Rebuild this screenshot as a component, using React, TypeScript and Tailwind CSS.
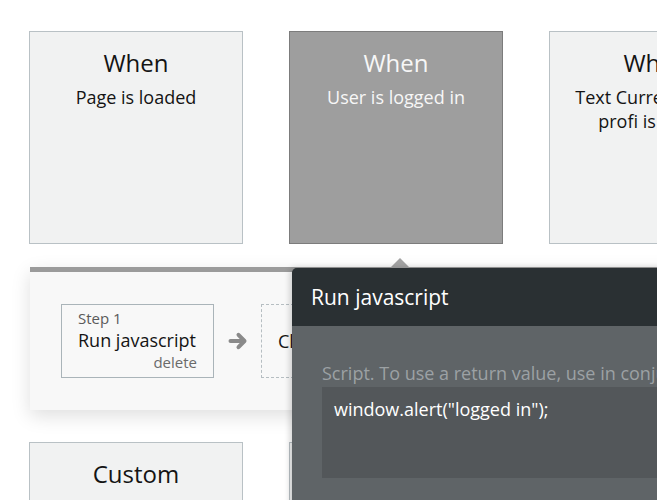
import React from "react";

function Card({
  title,
  lines,
  dark,
}: {
  title: string;
  lines?: string[];
  dark?: boolean;
}) {
  return (
    <div
      className={
        dark
          ? "w-[214px] h-[213px] shrink-0 border border-[#7c7c7c] bg-[#9e9e9e] text-[#f7f7f7] text-center pt-[15px]"
          : "w-[214px] h-[213px] shrink-0 border border-[#b9c1c5] bg-[#f1f2f2] text-[#141414] text-center pt-[15px]"
      }
    >
      <div className="text-[24px] leading-[32px]">{title}</div>
      {lines && (
        <div className="mt-[6px] text-[18px] leading-[24px] px-[8px]">
          {lines.map((l, i) => (
            <div key={i} className="whitespace-nowrap">
              {l}
            </div>
          ))}
        </div>
      )}
    </div>
  );
}

function Arrow() {
  return (
    <svg width="20" height="20" viewBox="0 0 20 20" className="shrink-0">
      <path
        d="M2.5 10 H16 M10.5 3.8 L16.5 10 L10.5 16.2"
        fill="none"
        stroke="#8a8a8a"
        strokeWidth="4"
        strokeLinecap="round"
        strokeLinejoin="round"
      />
    </svg>
  );
}

export default function App() {
  return (
    <div
      className="relative w-[657px] h-[500px] overflow-hidden bg-white"
      style={{ fontFamily: '"Open Sans", "Noto Sans", sans-serif' }}
    >
      <div className="flex gap-[46px] pl-[29px] pt-[31px] w-max">
        <Card title="When" lines={["Page is loaded"]} />
        <Card title="When" lines={["User is logged in"]} dark />
        <Card
          title="When"
          lines={["Text Current User's", "profi is empty"]}
        />
      </div>

      <div className="ml-[30px] mt-[23px] w-[720px] h-[143px] bg-[#f8f8f8] border-t-[5px] border-[#9b9b9b] shadow-[0_6px_18px_rgba(0,0,0,0.13)] pt-[32px] pl-[31px]">
        <div className="flex items-center">
          <div className="w-[153px] h-[74px] shrink-0 border border-[#aab4b9] pt-[3px] px-[16px]">
            <div className="text-[15px] leading-[20px] text-[#5a5a5a]">
              Step 1
            </div>
            <div className="text-[18px] leading-[24px] text-[#141414] whitespace-nowrap">
              Run javascript
            </div>
            <div className="text-[15px] leading-[20px] text-[#6a6a6a] text-right">
              delete
            </div>
          </div>
          <div className="ml-[14px]">
            <Arrow />
          </div>
          <div className="ml-[13px] w-[153px] h-[74px] shrink-0 border border-dashed border-[#b6bec2] flex items-center pl-[16px]">
            <span className="text-[18px] leading-[24px] text-[#141414] whitespace-nowrap">
              Click here to add an action...
            </span>
          </div>
        </div>
      </div>

      <div className="flex gap-[46px] pl-[29px] mt-[32px] w-max">
        <Card title="Custom" />
        <Card title="Custom" />
      </div>

      {/* pointer triangle */}
      <div className="absolute left-[390px] top-[258px] w-0 h-0 border-l-[10px] border-r-[10px] border-b-[10px] border-l-transparent border-r-transparent border-b-[#a2a2a2]" />

      {/* popup */}
      <div className="absolute left-[292px] top-[268px] w-[460px] h-[260px] rounded-tl-[5px] overflow-hidden bg-[#5f6467] shadow-[-2px_0_6px_rgba(0,0,0,0.18)]">
        <div className="h-[58px] bg-[#2a3033] pl-[19px] flex items-center">
          <span className="text-[21px] leading-[28px] text-white whitespace-nowrap">
            Run javascript
          </span>
        </div>
        <div className="pt-[35px] pl-[30px]">
          <div className="text-[18px] leading-[24px] text-[#9ca1a4] whitespace-nowrap">
            Script. To use a return value, use in conjunction with the Toolbox plugin
          </div>
          <div className="mt-[2px] h-[91px] bg-[#53575a] pt-[10px] pl-[12px]">
            <span className="text-[18px] leading-[24px] text-white whitespace-nowrap">
              window.alert("logged in");
            </span>
          </div>
        </div>
      </div>
    </div>
  );
}
